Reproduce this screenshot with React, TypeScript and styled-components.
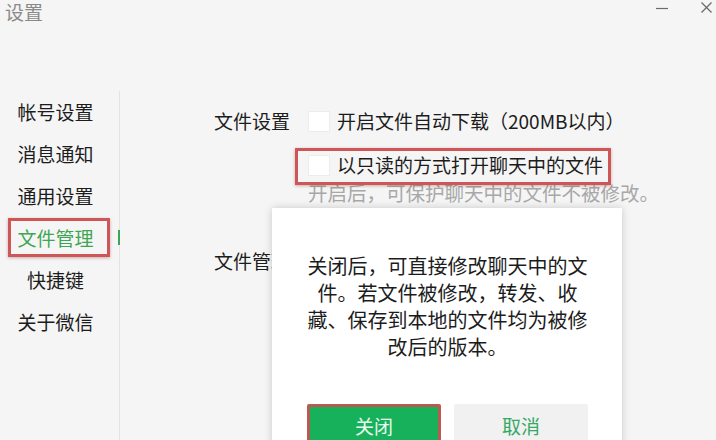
import React from 'react';
import styled, {createGlobalStyle} from 'styled-components';

const GlobalStyle = createGlobalStyle`
  html, body {
    margin: 0;
    padding: 0;
    background: #f5f5f5;
  }
  * {
    box-sizing: border-box;
  }
`;

const FONT = `"Noto Sans CJK SC", "Noto Sans", sans-serif`;
const HIGHLIGHT = '#cf5656';

const Window = styled.div`
  width: 716px;
  height: 440px;
  position: relative;
  overflow: hidden;
  display: flex;
  flex-direction: column;
  background: #f5f5f5;
  font-family: ${FONT};
  color: #1c1c1c;
`;

const TitleBar = styled.div`
  height: 24px;
  display: flex;
  justify-content: space-between;
  align-items: flex-start;
  padding: 0 4px 0 5px;
`;

const Title = styled.div`
  font-size: 19px;
  line-height: 24px;
  color: #8a8a8a;
`;

const WindowControls = styled.div`
  display: flex;
  align-items: flex-start;
  gap: 33px;
  padding-top: 2px;
`;

const ControlIcon = styled.svg`
  display: block;
  stroke: #6a6a6a;
  stroke-width: 1.2;
  fill: none;
`;

const Body = styled.div`
  flex: 1;
  display: flex;
  margin-top: 67px;
`;

const Sidebar = styled.nav`
  width: 120px;
  flex-shrink: 0;
  padding-right: 8px;
  border-right: 1px solid #e3e3e3;
`;

const NavItem = styled.div<{active?: boolean}>`
  position: relative;
  height: 42px;
  display: flex;
  align-items: center;
  justify-content: center;
  font-size: 19px;
  line-height: 26px;
  color: ${({active}) => (active ? '#3ea552' : '#1c1c1c')};

  ${({active}) =>
    active &&
    `
    &::before {
      content: '';
      position: absolute;
      right: -9px;
      top: 13px;
      width: 2px;
      height: 15px;
      background: #3ea552;
    }
    &::after {
      content: '';
      position: absolute;
      left: 8px;
      right: 1px;
      top: 1px;
      bottom: 2px;
      border: 3px solid ${HIGHLIGHT};
      box-shadow: 0 1px 3px rgba(120, 40, 40, 0.35);
    }
  `}
`;

const Content = styled.section`
  flex: 1;
  padding: 17px 0 0 94px;
  display: flex;
  flex-direction: column;
`;

const SettingRow = styled.div<{gap?: number}>`
  display: flex;
  align-items: flex-start;
  margin-top: ${({gap}) => gap || 0}px;
`;

const RowLabel = styled.div`
  width: 94px;
  flex-shrink: 0;
  font-size: 19px;
  line-height: 26px;
  white-space: nowrap;
`;

const Options = styled.div`
  display: flex;
  flex-direction: column;
  align-items: flex-start;
`;

const Option = styled.label<{highlighted?: boolean; gap?: number}>`
  position: relative;
  display: flex;
  align-items: center;
  gap: 7px;
  height: 26px;
  margin-top: ${({gap}) => gap || 0}px;
  font-size: 19px;
  line-height: 26px;
  white-space: nowrap;

  ${({highlighted}) =>
    highlighted &&
    `
    &::after {
      content: '';
      position: absolute;
      left: -13px;
      right: -8px;
      top: -4px;
      bottom: -7px;
      border: 3px solid ${HIGHLIGHT};
      box-shadow: 0 1px 3px rgba(120, 40, 40, 0.35);
    }
  `}
`;

const CheckBox = styled.span`
  width: 22px;
  height: 21px;
  flex-shrink: 0;
  background: #ffffff;
  border: 1px solid #ececec;
`;

const Hint = styled.div`
  margin-top: 2px;
  font-size: 19.5px;
  line-height: 26px;
  color: #a8a8a8;
  white-space: nowrap;
`;

const Dialog = styled.div`
  position: absolute;
  left: 272px;
  top: 208px;
  width: 350px;
  height: 260px;
  padding: 44px 34px 0 35px;
  background: #ffffff;
  box-shadow: 0 0 8px rgba(0, 0, 0, 0.18);
  display: flex;
  flex-direction: column;
`;

const DialogText = styled.p`
  margin: 0;
  font-size: 20px;
  line-height: 27px;
  text-align: center;
  color: #1c1c1c;
`;

const DialogActions = styled.div`
  display: flex;
  gap: 13px;
  margin-top: 44px;
`;

const Button = styled.button<{primary?: boolean}>`
  width: 134px;
  height: 44px;
  font-family: ${FONT};
  font-size: 19px;
  line-height: 26px;
  padding: 0;
  cursor: pointer;
  border-radius: 2px;
  background: ${({primary}) => (primary ? '#16b15a' : '#f1f1f1')};
  color: ${({primary}) => (primary ? '#eafaef' : '#36a867')};
  border: ${({primary}) =>
    primary ? `3px solid #b85a50` : '1px solid #f1f1f1'};
`;

const navItems = ['帐号设置', '消息通知', '通用设置', '文件管理', '快捷键', '关于微信'];

export default function App() {
  return (
    <>
      <GlobalStyle />
      <Window>
        <TitleBar>
          <Title>设置</Title>
          <WindowControls>
            <ControlIcon width="12" height="12" viewBox="0 0 12 12">
              <line x1="0" y1="6.5" x2="12" y2="6.5" />
            </ControlIcon>
            <ControlIcon width="11" height="11" viewBox="0 0 11 11">
              <line x1="0.5" y1="0.5" x2="10.5" y2="10.5" />
              <line x1="10.5" y1="0.5" x2="0.5" y2="10.5" />
            </ControlIcon>
          </WindowControls>
        </TitleBar>

        <Body>
          <Sidebar>
            {navItems.map(name => (
              <NavItem key={name} active={name === '文件管理'}>
                {name}
              </NavItem>
            ))}
          </Sidebar>

          <Content>
            <SettingRow>
              <RowLabel>文件设置</RowLabel>
              <Options>
                <Option>
                  <CheckBox />
                  开启文件自动下载（200MB以内）
                </Option>
                <Option highlighted gap={18}>
                  <CheckBox />
                  以只读的方式打开聊天中的文件
                </Option>
                <Hint>开启后，可保护聊天中的文件不被修改。</Hint>
              </Options>
            </SettingRow>
            <SettingRow gap={42}>
              <RowLabel>文件管理</RowLabel>
            </SettingRow>
          </Content>
        </Body>

        <Dialog>
          <DialogText>
            关闭后，可直接修改聊天中的文
            <br />
            件。若文件被修改，转发、收
            <br />
            藏、保存到本地的文件均为被修
            <br />
            改后的版本。
          </DialogText>
          <DialogActions>
            <Button primary>关闭</Button>
            <Button>取消</Button>
          </DialogActions>
        </Dialog>
      </Window>
    </>
  );
}
